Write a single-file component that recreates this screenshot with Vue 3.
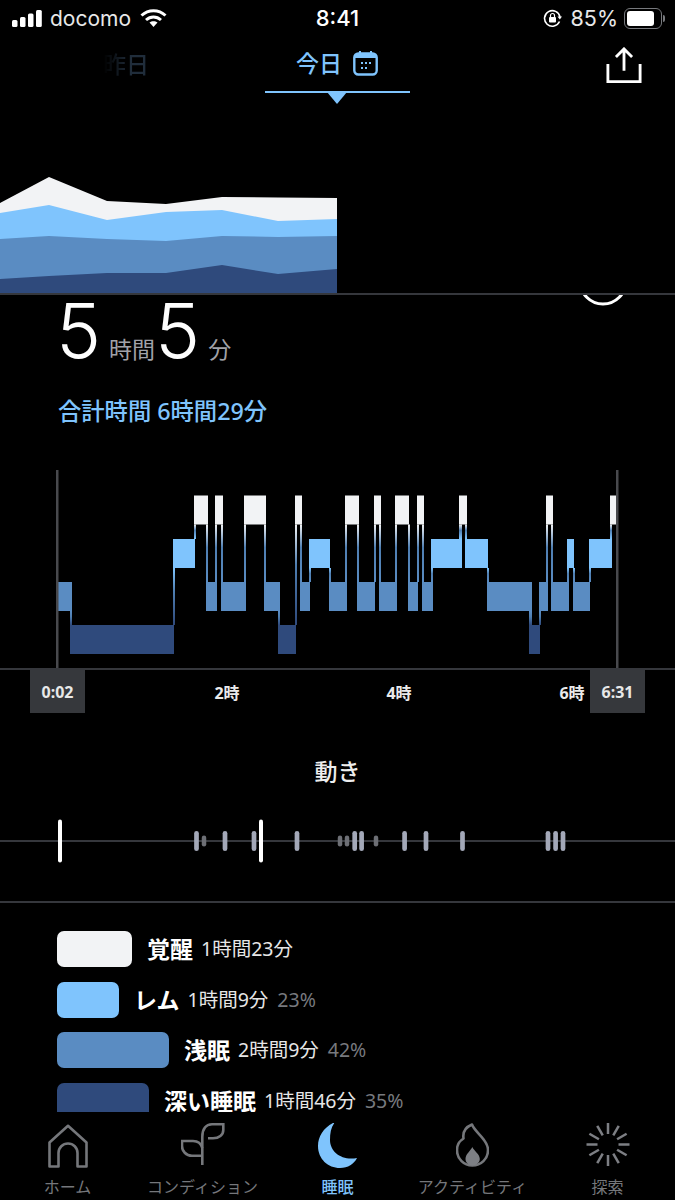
<template>
  <div class="screen">
    <header class="status-bar">
      <div class="status-left">
        <svg class="signal" width="30" height="17" viewBox="0 0 30 17" fill="#fff">
          <rect x="0" y="10" width="5.500" height="7" rx="1.500" />
          <rect x="8" y="7" width="5.500" height="10" rx="1.500" />
          <rect x="16" y="3.500" width="5.500" height="13.500" rx="1.500" />
          <rect x="24" y="0" width="5.800" height="17" rx="1.500" />
        </svg>
        <span class="carrier">docomo</span>
        <svg class="wifi" width="27" height="20" viewBox="0 0 27 20" fill="none" stroke="#fff" stroke-width="3">
          <path d="M1.500 7.500C8.500 1 18.500 1 25.500 7.500" />
          <path d="M6 12c4.500-4 10.500-4 15 0" />
          <path d="M13.500 19l-4-4.500c2.300-1.800 5.700-1.800 8 0z" fill="#fff" stroke="none" />
        </svg>
      </div>
      <span class="clock">8:41</span>
      <div class="status-right">
        <svg width="19" height="19" viewBox="0 0 19 19" fill="none" stroke="#fff" stroke-width="1.600">
          <path d="M16.500 12.500A7.800 7.800 0 1 1 17 8" />
          <path d="M14.500 7.500h4.500l-2.200 3z" fill="#fff" stroke="none" />
          <rect x="6" y="8" width="7" height="5.500" rx="1" fill="#fff" stroke="none" />
          <path d="M7.500 8V6.500a2 2 0 0 1 4 0V8" stroke-width="1.200" />
        </svg>
        <span class="battery-text">85%</span>
        <div class="battery">
          <div class="battery-fill" :style="{ width: battery + '%' }"></div>
        </div>
        <div class="battery-cap"></div>
      </div>
    </header>

    <nav class="day-nav">
      <div class="day day-prev">昨日</div>
      <div class="day day-current">
        <span>今日</span>
        <svg width="25" height="27" viewBox="0 -1 25 27" fill="none">
          <rect x="1.300" y="3.500" width="22.400" height="21" rx="4" stroke="#7fc4fd" stroke-width="2.400" />
          <path d="M1.500 8V7.500a4 4 0 0 1 4-4h14a4 4 0 0 1 4 4V8z" fill="#7fc4fd" />
          <path d="M7 1v3M18 1v3" stroke="#7fc4fd" stroke-width="2" />
          <path d="M8 13h2M12 13h2M16 13h2M8 18h2M12 18h2" stroke="#7fc4fd" stroke-width="1.800" />
        </svg>
      </div>
      <svg class="share" width="36" height="36" viewBox="0 0 38 38" fill="none" stroke="#fff" stroke-width="3">
        <path d="M19 25V2.500M10.500 10.500L19 2l8.500 8.500" />
        <path d="M2 18v18.500h34V18" />
      </svg>
    </nav>

    <section class="trend">
      <svg width="675" height="187" viewBox="0 106 675 187">
        <polygon v-for="band in trendBands" :key="band.color" :points="band.points" :fill="band.color" />
      </svg>
    </section>

    <section class="summary">
      <svg class="score-ring" width="52" height="12" viewBox="-26 14 52 12" fill="none">
        <circle cx="0" cy="0" r="23" stroke="#fff" stroke-width="3" />
      </svg>
      <div class="duration">
        <span class="digit">5</span><span class="unit unit-hours">時間</span><span class="digit">5</span><span class="unit unit-mins">分</span>
      </div>
      <div class="total">合計時間 6時間29分</div>
    </section>

    <section class="stages">
      <svg width="675" height="198" viewBox="0 470 675 198">
        <defs>
          <linearGradient
            v-for="link in stageLinks"
            :id="link.id"
            :key="link.id"
            gradientUnits="userSpaceOnUse"
            x1="0"
            x2="0"
            :y1="link.y"
            :y2="link.y + link.h"
          >
            <stop offset="0" :stop-color="link.from" />
            <stop offset="0.4" stop-color="#4f7fb2" />
            <stop offset="1" :stop-color="link.to" />
          </linearGradient>
        </defs>
        <rect
          v-for="seg in stageSegments"
          :key="seg.start"
          :x="seg.start"
          :y="seg.y"
          :width="seg.end - seg.start"
          height="29"
          :fill="seg.color"
        />
        <rect
          v-for="link in stageLinks"
          :key="link.id + 'r'"
          :x="link.x"
          :y="link.y"
          :width="link.w"
          :height="link.h"
          :fill="`url(#${link.id})`"
        />
        <rect x="56" y="470" width="2.500" height="198" fill="#48494d" />
        <rect x="616" y="470" width="2.500" height="198" fill="#48494d" />
      </svg>
      <div class="axis">
        <span class="axis-box" style="left: 30px">0:02</span>
        <span v-for="t in axisTicks" :key="t.label" class="axis-tick" :style="{ left: t.x + 'px' }">{{ t.label }}</span>
        <span class="axis-box" style="left: 590px">6:31</span>
      </div>
    </section>

    <section class="movement">
      <h2 class="movement-title">動き</h2>
      <svg class="movement-chart" width="675" height="46" viewBox="0 818 675 46">
        <rect x="0" y="840" width="675" height="2" fill="#35373c" />
        <rect
          v-for="m in movements"
          :key="m.x"
          :x="m.x - m.w / 2"
          :y="841 - m.h / 2"
          :width="m.w"
          :height="m.h"
          :rx="m.w / 2"
          :fill="m.color"
        />
      </svg>
    </section>

    <section class="legend">
      <div v-for="row in legend" :key="row.name" class="legend-row">
        <div class="legend-bar" :style="{ width: row.width + 'px', background: row.color }"></div>
        <span class="legend-name">{{ row.name }}</span>
        <span class="legend-time">{{ row.time }}</span>
        <span v-if="row.pct" class="legend-pct">{{ row.pct }}</span>
      </div>
    </section>

    <footer class="tab-bar">
      <div class="tab">
        <svg width="40" height="46" viewBox="0 -1 40 46" fill="none" stroke="#75777b" stroke-width="2.600">
          <path d="M1.500 42.500V18.500L20 1.800l18.500 16.700v24H29.500V29a9.500 9.500 0 0 0-19 0v13.500z" stroke-linejoin="round" />
        </svg>
        <span>ホーム</span>
      </div>
      <div class="tab">
        <svg width="44" height="46" viewBox="0 0 44 46" fill="none" stroke="#75777b" stroke-width="2.600">
          <path d="M21.300 42V14C21.300 6 25 1.300 31 1.300H42.300V7C42.300 12 38 15.300 32 15.300H27" />
          <path d="M21.300 25C20 20 17 18 12 18H1V23C1 28 5 32.700 11 32.700H21.300" />
        </svg>
        <span>コンディション</span>
      </div>
      <div class="tab tab-active">
        <svg width="40" height="46" viewBox="0 1 40 46" fill="#7fc4fd">
          <path d="M17 0C6 5 0 14 0 24c0 13 10 22 22 22 8 0 14-4 17-10-15 3-27-6-27-18C12 11 13 5 17 0z" />
        </svg>
        <span>睡眠</span>
      </div>
      <div class="tab">
        <svg width="33" height="46" viewBox="0 0 33 46" fill="none" stroke="#75777b" stroke-width="2.600">
          <path d="M16 1.500C18 7 24 11 28 17C31 21 32 24 32 27C32 36 25 42.500 16.300 42.500C8 42.500 1 36 1 27C1 22 3.500 18 7.500 15.500C6.500 9 10 4 16 1.500Z" stroke-linejoin="round" />
          <path d="M16.300 24C18 28 23.800 31 23.800 36C23.800 39.500 20.500 42.500 16.300 42.500C12.500 42.500 9.500 39.500 9.500 36C9.500 31 14.500 28 16.300 24Z" fill="#7d7f84" stroke="none" />
        </svg>
        <span>アクティビティ</span>
      </div>
      <div class="tab">
        <svg width="44" height="46" viewBox="-22 -21.500 44 46" stroke="#7d7f84" stroke-width="2.500">
          <line v-for="a in rays" :key="a" x1="0" y1="-21.500" x2="0" y2="-10.500" :transform="`rotate(${a})`" />
        </svg>
        <span>探索</span>
      </div>
    </footer>
  </div>
</template>

<script setup>
const battery = 85

const WHITE = '#f2f3f5'
const REM = '#7fc4fd'
const LIGHT = '#5a8cc2'
const DEEP = '#2f4a7c'

// top edges of each band, x is shared
const xs = [0, 49, 107, 166, 222, 278, 337]
const edges = [
  [203, 177, 201, 204, 197, 197.500, 198],
  [213, 205, 220, 212, 210, 221, 219],
  [239, 236, 239, 241, 236, 237, 236],
  [279, 276, 273, 273, 265, 274, 269]
]
const trendBands = [WHITE, REM, LIGHT, DEEP].map((color, i) => ({
  color,
  points: xs.map((x, j) => `${x},${edges[i][j]}`).join(' ') + ' 337,293 0,293'
}))

const levels = {
  awake: { y: 495.500, color: WHITE },
  rem: { y: 539, color: REM },
  light: { y: 582, color: LIGHT },
  deep: { y: 625, color: DEEP }
}

const rawStages = [
  ['light', 57.500, 72], ['deep', 70, 174], ['rem', 173, 195], ['awake', 194, 208],
  ['light', 206, 217], ['awake', 215, 223], ['light', 221, 246], ['awake', 244, 266],
  ['light', 264, 280], ['deep', 278, 296], ['awake', 295, 302], ['light', 300, 310],
  ['rem', 309, 330], ['light', 329, 347], ['awake', 345, 359], ['light', 357, 375],
  ['awake', 374, 381], ['light', 379, 397], ['awake', 395, 409], ['light', 408, 418],
  ['awake', 417, 424], ['light', 422, 433], ['rem', 431, 462], ['awake', 459, 467],
  ['rem', 465, 488], ['light', 487, 532], ['deep', 529, 540], ['light', 539, 548],
  ['awake', 546, 553], ['light', 551, 569], ['rem', 567, 574], ['light', 573, 590],
  ['rem', 589, 612], ['awake', 610, 618]
]

const stageSegments = rawStages.map(([level, start, end]) => ({
  start,
  end,
  y: levels[level].y,
  color: levels[level].color
}))

// thin stems joining one stage to the next
const stageLinks = stageSegments.slice(1).map((next, i) => {
  const cur = stageSegments[i]
  const curIsUpper = cur.y < next.y
  const upper = curIsUpper ? cur : next
  const lower = curIsUpper ? next : cur
  return {
    id: `link${i}`,
    x: next.start,
    w: Math.max(cur.end - next.start, 2),
    y: upper.y + 29,
    h: lower.y - upper.y - 29,
    from: upper.color,
    to: lower.color
  }
})

const axisTicks = [
  { label: '2時', x: 227 },
  { label: '4時', x: 399 },
  { label: '6時', x: 572 }
]

const big = { w: 4, h: 43, color: '#ffffff' }
const mid = { w: 4.700, h: 20, color: '#a3a8b8' }
const small = { w: 4.500, h: 11, color: '#6d6f75' }
const movements = [
  [60, big], [196.500, mid], [204, small], [225, mid], [254, mid], [261, big],
  [297, mid], [340, small], [347, small], [354.700, mid], [361.600, mid], [376, small],
  [404.600, mid], [426, mid], [462.500, mid], [548, mid], [555.600, mid], [563, mid]
].map(([x, kind]) => ({ x, ...kind }))

const legend = [
  { name: '覚醒', time: '1時間23分', pct: '', width: 75, color: WHITE },
  { name: 'レム', time: '1時間9分', pct: '23%', width: 62, color: REM },
  { name: '浅眠', time: '2時間9分', pct: '42%', width: 112, color: LIGHT },
  { name: '深い睡眠', time: '1時間46分', pct: '35%', width: 92, color: DEEP }
]

const rays = [0, 30, 60, 90, 120, 150, 180, 210, 240, 270, 300, 330]
</script>

<style>
html,
body {
  margin: 0;
  background: #000;
}
</style>

<style scoped>
.screen {
  width: 675px;
  height: 1200px;
  overflow: hidden;
  display: flex;
  flex-direction: column;
  background: #000;
  color: #fff;
  font-family: 'Noto Sans', 'Noto Sans CJK JP', sans-serif;
}

.status-bar {
  height: 36px;
  flex: none;
  display: flex;
  align-items: center;
  justify-content: space-between;
  position: relative;
  padding: 0 10px 0 12px;
  box-sizing: border-box;
  font-family: 'Inter', 'Noto Sans', sans-serif;
}

.status-left,
.status-right {
  display: flex;
  align-items: center;
}

.carrier {
  margin-left: 8px;
  font-size: 21px;
  color: #e8e8e8;
}

.wifi {
  margin-left: 9px;
}

.clock {
  position: absolute;
  left: 0;
  right: 0;
  text-align: center;
  font-size: 22px;
  font-weight: 500;
}

.battery-text {
  margin-left: 9px;
  font-size: 21.500px;
  color: #e8e8e8;
}

.battery {
  margin-left: 6px;
  width: 38px;
  height: 21px;
  box-sizing: border-box;
  border: 1.500px solid #77797d;
  border-radius: 6px;
  padding: 2px;
}

.battery-fill {
  height: 100%;
  background: #fff;
  border-radius: 3px;
}

.battery-cap {
  width: 2px;
  height: 7px;
  margin-left: 1px;
  background: #77797d;
  border-radius: 0 2px 2px 0;
}

.day-nav {
  height: 70px;
  flex: none;
  position: relative;
  display: flex;
  justify-content: center;
}

.day {
  height: 57px;
  padding-bottom: 3px;
  box-sizing: border-box;
  display: flex;
  align-items: center;
  gap: 11px;
  font-size: 23px;
  font-weight: 500;
}

.day-prev {
  position: absolute;
  left: 103px;
  top: 0;
  color: #202d3b;
  -webkit-mask-image: linear-gradient(90deg, transparent, #000 60%);
  mask-image: linear-gradient(90deg, transparent, #000 60%);
}

.day-current {
  position: relative;
  width: 145px;
  padding-left: 31px;
  color: #7fc4fd;
  border-bottom: 2px solid #7fc4fd;
}

.day-current::after {
  content: '';
  position: absolute;
  left: 62px;
  top: 56px;
  border-style: solid;
  border-width: 12px 10.500px 0;
  border-color: #7fc4fd transparent transparent;
}

.share {
  position: absolute;
  left: 606px;
  top: 11px;
}

.trend {
  height: 187px;
  flex: none;
  border-bottom: 2px solid #35373c;
}

.trend svg,
.stages svg,
.movement-chart {
  display: block;
}

.summary {
  height: 175px;
  flex: none;
  position: relative;
  padding-left: 56px;
  box-sizing: border-box;
}

.score-ring {
  position: absolute;
  left: 577px;
  top: 0;
}

.duration {
  display: flex;
  align-items: baseline;
  height: 70px;
  line-height: 70px;
}

.digit {
  font-family: 'Inter', sans-serif;
  font-size: 76px;
  font-weight: 300;
  color: #fdfdfd;
}

.unit {
  font-size: 23px;
  color: #a0a2a8;
}

.unit-hours {
  margin-left: 8px;
}

.unit-mins {
  margin-left: 8px;
}

.total {
  margin-top: 29px;
  margin-left: 2px;
  font-size: 23.300px;
  font-weight: 500;
  line-height: 34px;
  color: #7fc4fd;
}

.stages {
  flex: none;
}

.axis {
  position: relative;
  height: 45px;
  border-top: 2px solid #35373c;
  box-sizing: border-box;
  font-size: 16px;
  font-weight: 700;
}

.axis-box {
  position: absolute;
  top: 0;
  width: 55px;
  height: 43px;
  display: flex;
  align-items: center;
  justify-content: center;
  background: #36383c;
  color: #e8e8e8;
}

.axis-tick {
  position: absolute;
  top: 0;
  height: 43px;
  display: flex;
  align-items: center;
  transform: translateX(-50%);
  color: #eaeaea;
}

.movement {
  flex: none;
  height: 190px;
  border-bottom: 2px solid #35373c;
  box-sizing: border-box;
}

.movement-title {
  margin: 45px 0 0;
  height: 26px;
  line-height: 26px;
  font-size: 23px;
  font-weight: 500;
  text-align: center;
  color: #eeeeee;
}

.movement-chart {
  margin-top: 34px;
}

.legend {
  flex: 1;
  min-height: 0;
  padding: 28px 0 0 57px;
  display: flex;
  flex-direction: column;
  gap: 14.500px;
}

.legend-row {
  flex: none;
  height: 36px;
  display: flex;
  align-items: center;
}

.legend-bar {
  height: 36px;
  flex: none;
  border-radius: 7px;
}

.legend-name {
  margin-left: 15px;
  font-size: 23px;
  line-height: 22px;
  font-weight: 700;
}

.legend-time {
  margin-left: 8px;
  font-size: 19.500px;
  line-height: 22px;
  color: #e6e6e6;
}

.legend-pct {
  margin-left: 9px;
  font-size: 19.500px;
  line-height: 22px;
  color: #77797e;
}

.tab-bar {
  height: 88px;
  flex: none;
  position: relative;
  z-index: 1;
  display: grid;
  grid-template-columns: repeat(5, 135px);
  background: #000;
}

.tab {
  display: flex;
  flex-direction: column;
  align-items: center;
  justify-content: flex-start;
  padding-top: 11px;
  box-sizing: border-box;
  font-size: 16px;
  color: #75777b;
}

.tab svg {
  flex: none;
}

.tab span {
  margin-top: 7px;
  line-height: 22px;
  white-space: nowrap;
}

.tab-active {
  color: #7fc4fd;
  font-weight: 500;
}
</style>
